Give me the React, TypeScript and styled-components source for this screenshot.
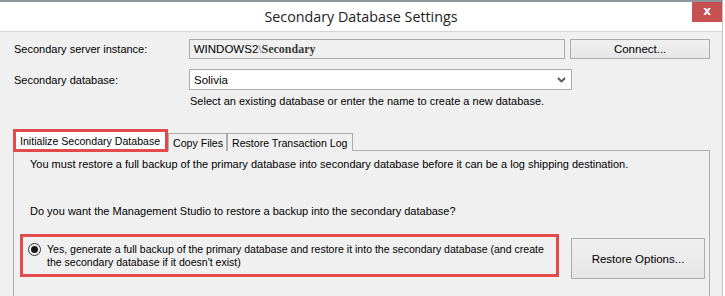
import React from "react";
import styled, { createGlobalStyle } from "styled-components";

const GlobalStyle = createGlobalStyle`
  html, body {
    margin: 0;
    padding: 0;
    background: #ffffff;
    overflow: hidden;
  }
  * {
    box-sizing: border-box;
  }
`;

const Window = styled.div`
  width: 723px;
  height: 296px;
  border-top: 2px solid #8e959c;
  border-right: 1px solid #c3c3c3;
  font-family: "Liberation Sans", Arial, sans-serif;
  font-size: 11px;
  color: #000000;
  white-space: nowrap;
  overflow: hidden;
`;

const TitleBar = styled.div`
  display: flex;
  align-items: flex-start;
  height: 30px;
  background: #ffffff;
  border-bottom: 1px solid #d4d4d4;
`;

const Title = styled.div`
  flex: 1;
  padding-left: 30px;
  text-align: center;
  font-family: "Open Sans", "Noto Sans", sans-serif;
  font-size: 14.3px;
  line-height: 30px;
  color: #1e1e1e;
`;

const CloseButton = styled.div`
  width: 30px;
  height: 20px;
  background: #c75050;
  color: #ffffff;
  font-family: "DejaVu Sans", sans-serif;
  font-weight: bold;
  font-size: 12px;
  line-height: 19px;
  text-align: center;
`;

const Body = styled.div`
  background: #f0f0f0;
  height: 264px;
  padding: 7px 12px 0 13px;
`;

const FormRow = styled.div<{ $mt?: number }>`
  display: flex;
  align-items: center;
  margin-top: ${(p) => p.$mt ?? 0}px;
`;

const Label = styled.div`
  width: 176px;
  padding-left: 1px;
`;

const TextField = styled.div<{ $w: number; $h: number; $bg: string }>`
  display: flex;
  align-items: center;
  width: ${(p) => p.$w}px;
  height: ${(p) => p.$h}px;
  padding: 0 4px;
  background: ${(p) => p.$bg};
  border: 1px solid #ababab;
  font-size: 11.5px;
`;

const Serif = styled.span`
  font-family: "Liberation Serif", "Times New Roman", serif;
  font-size: 12px;
  font-weight: bold;
  color: #3a3a3a;
`;

const Slash = styled.span`
  color: #9a9a9a;
`;

const Chevron = styled.svg`
  margin-left: auto;
  margin-right: 1px;
`;

const Button = styled.div<{ $w: number; $h: number }>`
  display: flex;
  align-items: center;
  justify-content: center;
  width: ${(p) => p.$w}px;
  height: ${(p) => p.$h}px;
  border: 1px solid #acacac;
  background: linear-gradient(#f0f0f0, #e5e5e5);
  font-size: 11.5px;
`;

const Hint = styled.div`
  margin: 4px 0 0 177px;
  line-height: 14px;
`;

const Tabs = styled.div`
  margin-top: 21px;
`;

const TabStrip = styled.div`
  display: flex;
  align-items: flex-end;
  height: 21px;
`;

const Tab = styled.div<{ $w: number; $active?: boolean }>`
  position: relative;
  z-index: ${(p) => (p.$active ? 2 : 1)};
  display: flex;
  align-items: center;
  width: ${(p) => p.$w}px;
  height: ${(p) => (p.$active ? 23 : 18)}px;
  margin-bottom: ${(p) => (p.$active ? -2 : -1)}px;
  padding-left: 4px;
  background: ${(p) => (p.$active ? "#ffffff" : "#f0f0f0")};
  border: ${(p) => (p.$active ? "3px solid #e24b4b" : "1px solid #adadad")};
  border-bottom: ${(p) => (p.$active ? "3px solid #e24b4b" : "none")};
  font-size: 10.6px;
  overflow: hidden;
`;

const Panel = styled.div`
  width: 697px;
  height: 150px;
  border: 1px solid #adadad;
  border-bottom: none;
  padding-top: 7px;
`;

const PanelText = styled.div<{ $mt?: number }>`
  margin: ${(p) => p.$mt ?? 0}px 0 0 16px;
  line-height: 13px;
`;

const OptionRow = styled.div`
  display: flex;
  align-items: flex-start;
  margin-top: 16px;
  padding-left: 6px;
`;

const Highlight = styled.div`
  display: flex;
  align-items: flex-start;
  width: 539px;
  height: 43px;
  padding: 6px 0 0 5px;
  border: 3px solid #e24b4b;
`;

const Radio = styled.div`
  flex: none;
  display: flex;
  align-items: center;
  justify-content: center;
  width: 13px;
  height: 13px;
  border: 1px solid #333333;
  border-radius: 50%;
  background: #f4f4f4;
  &::after {
    content: "";
    width: 7px;
    height: 7px;
    border-radius: 50%;
    background: #1a1a1a;
  }
`;

const OptionText = styled.div`
  margin-left: 6px;
  font-size: 10.55px;
  line-height: 12.5px;
`;

const SideButton = styled(Button)`
  margin: 4px 0 0 12px;
`;

export default function App() {
  return (
    <>
      <GlobalStyle />
      <Window>
        <TitleBar>
          <Title>Secondary Database Settings</Title>
          <CloseButton>x</CloseButton>
        </TitleBar>
        <Body>
          <FormRow>
            <Label>Secondary server instance:</Label>
            <TextField $w={377} $h={20} $bg="#f0f0f0">
              WINDOWS2
              <Slash>\</Slash>
              <Serif>Secondary</Serif>
            </TextField>
            <Button $w={140} $h={20} style={{ marginLeft: 5 }}>
              Connect...
            </Button>
          </FormRow>
          <FormRow $mt={10}>
            <Label>Secondary database:</Label>
            <TextField $w={383} $h={21} $bg="#ffffff">
              Solivia
              <Chevron width="9" height="6" viewBox="0 0 9 6">
                <path d="M1 1 L4.5 4.5 L8 1" stroke="#555" strokeWidth="1.8" fill="none" />
              </Chevron>
            </TextField>
          </FormRow>
          <Hint>Select an existing database or enter the name to create a new database.</Hint>
          <Tabs>
            <TabStrip>
              <Tab $w={155} $active>
                Initialize Secondary Database
              </Tab>
              <Tab $w={59}>Copy Files</Tab>
              <Tab $w={126}>Restore Transaction Log</Tab>
            </TabStrip>
            <Panel>
              <PanelText>
                You must restore a full backup of the primary database into secondary database before it can be a log
                shipping destination.
              </PanelText>
              <PanelText $mt={34}>
                Do you want the Management Studio to restore a backup into the secondary database?
              </PanelText>
              <OptionRow>
                <Highlight>
                  <Radio />
                  <OptionText>
                    Yes, generate a full backup of the primary database and restore it into the secondary database (and
                    create
                    <br />
                    the secondary database if it doesn't exist)
                  </OptionText>
                </Highlight>
                <SideButton $w={134} $h={41}>
                  Restore Options...
                </SideButton>
              </OptionRow>
            </Panel>
          </Tabs>
        </Body>
      </Window>
    </>
  );
}
